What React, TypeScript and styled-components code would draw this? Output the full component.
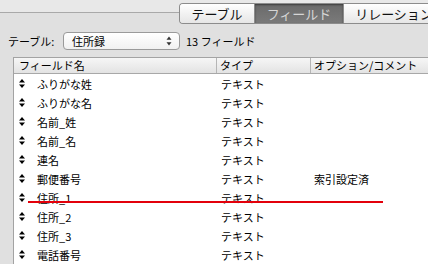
import React from "react";
import styled, { createGlobalStyle } from "styled-components";

const GlobalStyle = createGlobalStyle`
  html, body {
    margin: 0;
    padding: 0;
    background: #e0e0e0;
    overflow: hidden;
  }
  body {
    font-family: "Noto Sans CJK JP", "Liberation Sans", sans-serif;
    color: #000;
  }
`;

interface IField {
  name: string;
  type: string;
  comment?: string;
}

const fields: IField[] = [
  { name: "ふりがな姓", type: "テキスト" },
  { name: "ふりがな名", type: "テキスト" },
  { name: "名前_姓", type: "テキスト" },
  { name: "名前_名", type: "テキスト" },
  { name: "連名", type: "テキスト" },
  { name: "郵便番号", type: "テキスト", comment: "索引設定済" },
  { name: "住所_1", type: "テキスト" },
  { name: "住所_2", type: "テキスト" },
  { name: "住所_3", type: "テキスト" },
  { name: "電話番号", type: "テキスト" },
];

const tabs = ["テーブル", "フィールド", "リレーション"];

const DragHandle = () => (
  <svg width="6" height="9" viewBox="0 0 6 9">
    <path d="M3 0 L6 3.5 L0 3.5 Z" fill="#000" />
    <path d="M0 5.5 L6 5.5 L3 9 Z" fill="#000" />
  </svg>
);

const PopupArrows = () => (
  <svg width="6" height="10" viewBox="0 0 6 10">
    <path d="M3 0.5 L5.5 3.8 L0.5 3.8 Z" fill="#333" />
    <path d="M0.5 6.2 L5.5 6.2 L3 9.5 Z" fill="#333" />
  </svg>
);

export default function App() {
  return (
    <>
      <GlobalStyle />
      <Page>
        <TopBar>
          <Segmented>
            {tabs.map((t, i) => (
              <Segment key={t} selected={i === 1} width={[74, 88, 100][i]}>
                {t}
              </Segment>
            ))}
          </Segmented>
        </TopBar>
        <FilterRow>
          <Label>テーブル:</Label>
          <Popup>
            <span>住所録</span>
            <PopupArrows />
          </Popup>
          <Count>13 フィールド</Count>
        </FilterRow>
        <Table>
          <HeaderRow>
            <HeadCell width={202}>フィールド名</HeadCell>
            <HeadCell width={94} divider>
              タイプ
            </HeadCell>
            <HeadCell divider>オプション/コメント</HeadCell>
          </HeaderRow>
          <Body>
            {fields.map(f => (
              <Row key={f.name}>
                <NameCell>
                  <HandleWrap>
                    <DragHandle />
                  </HandleWrap>
                  {f.name}
                </NameCell>
                <TypeCell>{f.type}</TypeCell>
                <CommentCell>{f.comment ?? ""}</CommentCell>
              </Row>
            ))}
            <DropIndicator />
          </Body>
        </Table>
      </Page>
    </>
  );
}

const Page = styled.div`
  width: 428px;
  height: 264px;
  overflow: hidden;
  display: flex;
  flex-direction: column;
`;

const TopBar = styled.div`
  height: 28px;
  box-sizing: border-box;
  padding: 3px 0 0 179px;
  display: flex;
  background: linear-gradient(
    to bottom,
    #e8e8e8 0px,
    #e8e8e8 12px,
    #a9a9a9 12px,
    #a9a9a9 13px,
    #e0e0e0 13px
  );
`;

const Segmented = styled.div`
  display: flex;
  height: 21px;
  box-sizing: border-box;
  border: 1px solid #8c8c8c;
  border-right: none;
  border-radius: 4px 0 0 4px;
  overflow: hidden;
  flex-shrink: 0;
`;

const Segment = styled.div<{ selected?: boolean; width: number }>`
  width: ${p => p.width}px;
  flex-shrink: 0;
  display: flex;
  align-items: center;
  justify-content: center;
  font-size: 13px;
  line-height: 1;
  color: ${p => (p.selected ? "#d6d6d6" : "#111")};
  background: ${p =>
    p.selected
      ? "linear-gradient(to bottom, #6a6a6a, #7a7a7a)"
      : "linear-gradient(to bottom, #ffffff, #f2f2f2 50%, #e6e6e6)"};
  box-shadow: ${p => (p.selected ? "inset 0 1px 2px rgba(0,0,0,0.45)" : "none")};
  & + & {
    border-left: 1px solid #8c8c8c;
  }
`;

const FilterRow = styled.div`
  height: 32px;
  box-sizing: border-box;
  padding: 0 0 2px 8px;
  display: flex;
  align-items: center;
  font-size: 11px;
`;

const Label = styled.span`
  width: 55px;
`;

const Popup = styled.div`
  width: 117px;
  height: 18px;
  box-sizing: border-box;
  border: 1px solid #9a9a9a;
  border-radius: 4px;
  background: linear-gradient(to bottom, #ffffff, #f1f1f1);
  display: flex;
  align-items: center;
  justify-content: space-between;
  padding: 0 7px 0 8px;
  font-size: 11px;
`;

const Count = styled.span`
  margin-left: 6px;
`;

const Table = styled.div`
  flex: 1;
  margin-left: 13px;
  border-top: 1px solid #a3a3a3;
  border-left: 1px solid #a3a3a3;
  background: #fff;
  display: flex;
  flex-direction: column;
`;

const HeaderRow = styled.div`
  height: 15px;
  display: flex;
  background: linear-gradient(to bottom, #f6f6f6, #e3e3e3);
  border-bottom: 1px solid #a8a8a8;
  font-size: 11px;
  line-height: 15px;
`;

const HeadCell = styled.div<{ width?: number; divider?: boolean }>`
  ${p => (p.width ? `width: ${p.width}px;` : "flex: 1;")}
  flex-shrink: 0;
  box-sizing: border-box;
  padding-left: ${p => (p.divider ? 3 : 5)}px;
  border-left: ${p => (p.divider ? "1px solid #b5b5b5" : "none")};
  white-space: nowrap;
`;

const Body = styled.div`
  position: relative;
  display: flex;
  flex-direction: column;
`;

const Row = styled.div`
  height: 19px;
  display: flex;
  align-items: center;
  font-size: 11px;
  white-space: nowrap;
`;

const NameCell = styled.div`
  width: 202px;
  display: flex;
  align-items: center;
`;

const HandleWrap = styled.span`
  width: 23px;
  padding-left: 5px;
  box-sizing: border-box;
  display: flex;
  align-items: center;
`;

const TypeCell = styled.div`
  width: 98px;
  padding-left: 5px;
  box-sizing: border-box;
`;

const CommentCell = styled.div`
  flex: 1;
`;

const DropIndicator = styled.div`
  position: absolute;
  left: 14px;
  top: 127px;
  width: 355px;
  height: 2px;
  background: #e3000b;
`;
